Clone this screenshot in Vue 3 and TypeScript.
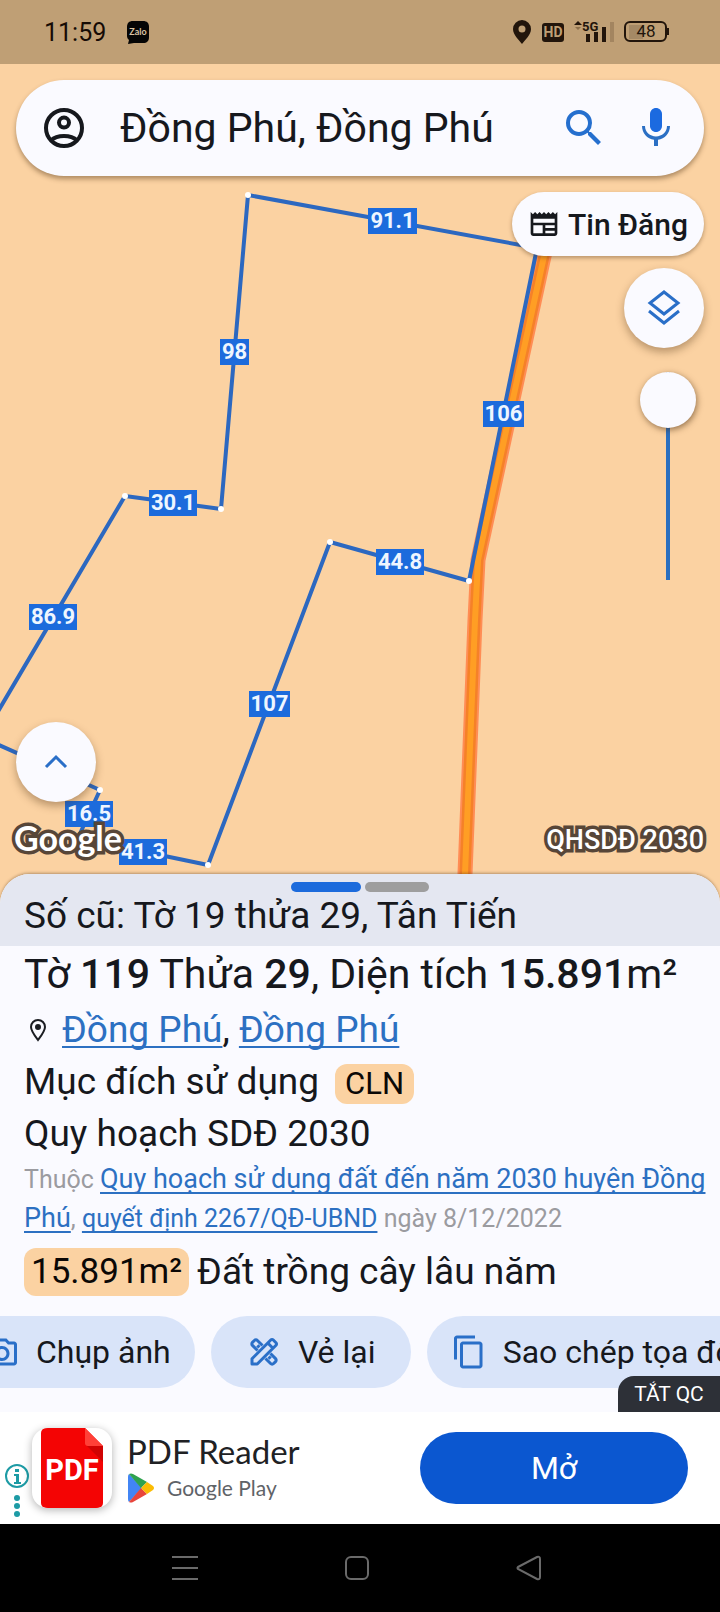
<script setup lang="ts">
import { onMounted, ref } from 'vue'

interface EdgeLabel {
  text: string
  x: number
  y: number
  w: number
}

const edgeLabels: EdgeLabel[] = [
  { text: '91.1', x: 368, y: 144, w: 49 },
  { text: '98', x: 220, y: 275, w: 29 },
  { text: '30.1', x: 149, y: 426, w: 48 },
  { text: '86.9', x: 29, y: 540, w: 48 },
  { text: '106', x: 483, y: 337, w: 41 },
  { text: '44.8', x: 376, y: 485, w: 48 },
  { text: '107', x: 249, y: 627, w: 41 },
  { text: '16.5', x: 65, y: 737, w: 48 },
  { text: '41.3', x: 119, y: 775, w: 48 },
]

const vertices: [number, number][] = [
  [248, 131], [221, 445], [125, 432], [330, 478], [469, 517], [208, 801], [100, 726],
]

const query = ref('Đồng Phú, Đồng Phú')
const opacity = ref(100)
const actions = ref<HTMLElement | null>(null)

onMounted(() => {
  if (actions.value) actions.value.scrollLeft = 64
})
</script>

<template>
  <div class="screen">
    <header class="status">
      <span class="time">11:59</span>
      <svg class="zalo" viewBox="0 0 24 24" aria-hidden="true">
        <path d="M7 1h10c4 0 6 2 6 6v10c0 4-2 6-6 6H8l-6 1 1-4c-1-1-2-2-2-4V7c0-4 2-6 6-6z" fill="#050505" />
        <text x="12" y="15" text-anchor="middle" class="zalo-text">Zalo</text>
      </svg>
      <div class="status-icons">
        <svg width="20" height="24" viewBox="0 0 20 24" aria-hidden="true">
          <path fill-rule="evenodd" d="M10 0a9 9 0 0 0-9 9c0 6 6 11 9 15 3-4 9-9 9-15a9 9 0 0 0-9-9zm0 5.500a3.500 3.500 0 1 1 0 7 3.500 3.500 0 0 1 0-7z" fill="#22150b" />
        </svg>
        <span class="hd">HD</span>
        <svg width="40" height="24" viewBox="0 0 40 24" aria-hidden="true">
          <path d="M0 5l4-4 4 4z" fill="#22150b" />
          <path d="M1 7h6l-3 3z" fill="#8c6f4b" />
          <text x="8" y="11" class="net">5G</text>
          <path d="M12 14h4v8h-4zM20 12h4v10h-4zM28 7h4v15h-4z" fill="#22150b" />
          <path d="M36 2h4v20h-4z" fill="#a38560" />
        </svg>
        <svg width="46" height="22" viewBox="0 0 46 22" aria-hidden="true">
          <path d="M5 4h14v14H5z" fill="#a58965" />
          <rect x="1" y="1" width="41" height="19" rx="5" fill="none" stroke="#22150b" stroke-width="2" />
          <path d="M43 7h2v7h-2z" fill="#22150b" />
          <text x="22" y="16" text-anchor="middle" class="batt">48</text>
        </svg>
      </div>
    </header>

    <main class="map">
      <svg class="parcels" viewBox="0 0 720 840" preserveAspectRatio="xMidYMin slice" role="img" aria-label="Bản đồ thửa đất">
        <g fill="none" stroke-linejoin="round">
          <path d="M546 183L478 496L475 556L465 810L464 850" stroke="#ff8d55" stroke-width="15" />
          <path d="M546 183L478 496L475 556L465 810L464 850" stroke="#f58128" stroke-width="11" />
          <path d="M546 183L478 496L475 556L465 810L464 850" stroke="#ff9e24" stroke-width="6" />
          <path d="M-10 661L125 432L221 445L248 131L537 184L469 517L330 478L208 801L78 774L100 726L-10 677" stroke="#2c68c0" stroke-width="4" />
        </g>
        <circle v-for="(p, i) in vertices" :key="i" :cx="p[0]" :cy="p[1]" r="3" fill="#fff" />
        <g v-for="l in edgeLabels" :key="l.text">
          <rect :x="l.x" :y="l.y" :width="l.w" height="26" fill="#1c6bdc" />
          <text :x="l.x + l.w / 2" :y="l.y + 20" text-anchor="middle" class="edge">{{ l.text }}</text>
        </g>
      </svg>

      <div class="overlay">
        <div class="top">
          <form class="search" role="search" @submit.prevent>
            <button type="button" class="icon-btn" aria-label="Tài khoản">
              <svg viewBox="0 0 24 24" fill="none" stroke="#16181d" stroke-width="2">
                <circle cx="12" cy="12" r="9" />
                <circle cx="12" cy="9.300" r="2.500" />
                <path d="M5.500 18.200c3-3 10-3 13 0" />
              </svg>
            </button>
            <input v-model="query" class="query" type="text" aria-label="Tìm kiếm" />
            <button type="submit" class="icon-btn" aria-label="Tìm">
              <svg viewBox="0 0 24 24" fill="#256fce">
                <path d="M15.500 14h-.79l-.28-.27A6.470 6.470 0 0 0 16 9.500 6.500 6.500 0 1 0 9.500 16c1.610 0 3.090-.59 4.230-1.570l.27.28v.79l5 4.990L20.490 19l-4.990-5zm-6 0C7.010 14 5 11.990 5 9.500S7.010 5 9.500 5 14 7.010 14 9.500 11.990 14 9.500 14z" />
              </svg>
            </button>
            <button type="button" class="icon-btn mic" aria-label="Tìm bằng giọng nói">
              <svg viewBox="0 0 24 24">
                <path fill="#1b6ae0" d="M12 14c1.660 0 3-1.340 3-3V5c0-1.660-1.340-3-3-3S9 3.340 9 5v6c0 1.660 1.340 3 3 3z" />
                <path fill="#2b6fc4" d="M17.500 11c0 3-2.500 5.200-5.500 5.200S6.500 14 6.500 11H5c0 3.530 2.610 6.430 6 6.920V21h2v-3.080c3.390-.49 6-3.390 6-6.920z" />
              </svg>
            </button>
          </form>
          <div class="tools">
            <button type="button" class="posts">
              <svg viewBox="0 0 24 24" fill="#16181d" aria-hidden="true">
                <path d="M22 3l-1.670 1.670L18.670 3 17 4.670 15.330 3l-1.660 1.670L12 3l-1.670 1.670L8.670 3 7 4.670 5.330 3 3.670 4.670 2 3v16c0 1.100.9 2 2 2h16c1.100 0 2-.9 2-2V3zM11 19H4v-6h7v6zm9 0h-7v-2h7v2zm0-4h-7v-2h7v2zm0-4H4V8h16v3z" />
              </svg>
              Tin Đăng
            </button>
            <button type="button" class="round" aria-label="Lớp bản đồ">
              <svg width="36" height="40" viewBox="0 0 36 40" fill="none" stroke="#2a6fc8" stroke-width="3">
                <path d="M18 4L32 15L18 26L4 15z" />
                <path d="M3 23L18 35L33 23" />
              </svg>
            </button>
            <input v-model.number="opacity" class="slider" type="range" min="0" max="100" aria-label="Độ trong suốt" />
          </div>
        </div>
        <div class="bottom">
          <button type="button" class="round" aria-label="Mở rộng">
            <svg width="24" height="16" viewBox="0 0 24 16" fill="none" stroke="#2a6fc8" stroke-width="3">
              <path d="M2 13L12 3L22 13" />
            </svg>
          </button>
          <div class="credits">
            <span class="google">Google</span>
            <span class="layer-name">QHSDĐ 2030</span>
          </div>
        </div>
      </div>
    </main>

    <section class="sheet">
      <div class="sheet-head">
        <div class="pager"><i class="on"></i><i></i></div>
        <p class="old">Số cũ: Tờ 19 thửa 29, Tân Tiến</p>
      </div>
      <div class="info">
        <h1>Tờ <b>119</b> Thửa <b>29</b>, Diện tích <b>15.891</b>m²</h1>
        <p class="row">
          <svg class="pin" viewBox="0 0 18 24" fill="none" stroke="#1b1d22" stroke-width="2" aria-hidden="true">
            <path d="M9 22C6 18 2 13 2 9a7 7 0 0 1 14 0c0 4-4 9-7 13z" />
            <circle cx="9" cy="9" r="2" fill="#1b1d22" />
          </svg>
          <span><a href="#">Đồng Phú</a>, <a href="#">Đồng Phú</a></span>
        </p>
        <p class="row purpose">Mục đích sử dụng <span class="tag">CLN</span></p>
        <p class="row">Quy hoạch SDĐ 2030</p>
        <p class="source">
          Thuộc <a href="#" class="plan">Quy hoạch sử dụng đất đến năm 2030 huyện Đồng Phú</a>,
          <a href="#">quyết định 2267/QĐ-UBND</a> ngày 8/12/2022
        </p>
        <p class="row land"><span class="tag big">15.891m²</span> Đất trồng cây lâu năm</p>
      </div>
      <div ref="actions" class="actions">
        <button type="button">
          <svg viewBox="0 0 24 24" aria-hidden="true"><path d="M14.120 5l1.830 2H20v12H4V7h4.050l1.830-2h4.240M15 3H9L7.170 5H4c-1.100 0-2 .9-2 2v12c0 1.100.9 2 2 2h16c1.100 0 2-.9 2-2V7c0-1.100-.9-2-2-2h-3.170L15 3zm-3 7c1.650 0 3 1.350 3 3s-1.350 3-3 3-3-1.350-3-3 1.350-3 3-3m0-2c-2.760 0-5 2.240-5 5s2.240 5 5 5 5-2.240 5-5-2.240-5-5-5z" /></svg>
          Chụp ảnh
        </button>
        <button type="button">
          <svg viewBox="0 0 24 24" fill="none" aria-hidden="true">
            <g class="tools-icon">
              <path d="M4.300 7.600a1.400 1.400 0 0 1 0-2l1.300-1.300a1.400 1.400 0 0 1 2 0L11 7.700M7.700 11L4.300 7.600M16.300 13l3.400 3.400a1.400 1.400 0 0 1 0 2l-1.300 1.300a1.400 1.400 0 0 1-2 0L13 16.300" />
              <path d="M4 20v-3.500L16.500 4a1.200 1.200 0 0 1 1.700 0L20 5.800a1.200 1.200 0 0 1 0 1.700L7.500 20zM14.500 6l3.500 3.500M7.500 9l1.500-1.500M15 16.500l1.500-1.500" />
            </g>
          </svg>
          Vẻ lại
        </button>
        <button type="button">
          <svg viewBox="0 0 24 24" aria-hidden="true"><path d="M16 1H4c-1.100 0-2 .9-2 2v14h2V3h12V1zm3 4H8c-1.100 0-2 .9-2 2v14c0 1.100.9 2 2 2h11c1.100 0 2-.9 2-2V7c0-1.100-.9-2-2-2zm0 16H8V7h11v14z" /></svg>
          Sao chép tọa độ
        </button>
      </div>
    </section>

    <aside class="ad">
      <button type="button" class="close-ad">TẮT QC</button>
      <div class="ad-side">
        <svg width="24" height="54" viewBox="0 0 24 54" fill="#1d9ba5" aria-hidden="true">
          <circle cx="12" cy="12" r="11" fill="none" stroke="#1d9ba5" stroke-width="2" />
          <path d="M10 5h4v3h-4zM9 10h5v8h2v2H9v-2h2v-6H9z" />
          <circle cx="12" cy="34" r="3" /><circle cx="12" cy="42" r="3" /><circle cx="12" cy="50" r="3" />
        </svg>
      </div>
      <svg class="pdf" viewBox="0 0 80 80" aria-hidden="true">
        <path d="M14 0H53L71 18V75a5 5 0 0 1-5 5H14a5 5 0 0 1-5-5V5a5 5 0 0 1 5-5z" fill="#f40404" />
        <path d="M55 18H71V34z" fill="#d00303" />
        <path d="M53 0L71 18H56a3 3 0 0 1-3-3z" fill="#ff4038" />
        <text x="40" y="52" text-anchor="middle" class="pdf-text">PDF</text>
      </svg>
      <div class="ad-text">
        <span class="ad-name">PDF Reader</span>
        <span class="store">
          <svg width="28" height="30" viewBox="0 0 28 30" aria-hidden="true">
            <path d="M2 1Q1 2 1 4V26Q1 28 2 29L15 15z" fill="#4285f4" />
            <path d="M2 1Q4 0 6 1L20 9L14 15z" fill="#2fa24f" />
            <path d="M2 29Q4 30 6 29L20 21L14 15z" fill="#e8453c" />
            <path d="M20 9L26 13Q28 15 26 17L20 21L14 15z" fill="#fbbc04" />
          </svg>
          Google Play
        </span>
      </div>
      <button type="button" class="open">Mở</button>
    </aside>

    <nav class="sysnav">
      <button type="button" aria-label="Đa nhiệm">
        <svg viewBox="0 0 28 28"><path d="M1 3H27M1 14H27M1 25H27" /></svg>
      </button>
      <button type="button" aria-label="Trang chủ">
        <svg viewBox="0 0 28 28"><rect x="3" y="3" width="22" height="22" rx="5" /></svg>
      </button>
      <button type="button" aria-label="Quay lại">
        <svg viewBox="0 0 28 28"><path d="M3 13L22 3Q25 2 25 5V23Q25 26 22 25L3 15Q2 14 3 13z" /></svg>
      </button>
    </nav>
  </div>
</template>

<style>
body {
  margin: 0;
}
</style>

<style scoped>
.screen {
  display: flex;
  flex-direction: column;
  min-height: 100vh;
  overflow: hidden;
  font-family: Roboto, "Noto Sans", sans-serif;
  color: #16181d;
  background: #fbd2a2;
}
* {
  box-sizing: border-box;
}
p,
h1 {
  margin: 0;
  font-weight: 400;
}
button {
  border: 0;
  padding: 0;
  font: inherit;
  color: inherit;
  background: none;
  display: flex;
  align-items: center;
  justify-content: center;
  flex: none;
}
svg {
  display: block;
  flex: none;
}
.status {
  display: flex;
  align-items: center;
  height: 64px;
  padding: 0 50px 0 44px;
  background: #bf9f75;
}
.time {
  font-size: 25px;
  color: #160b05;
}
.zalo {
  width: 24px;
  height: 24px;
  margin-left: 20px;
}
.zalo-text {
  font: 700 9px Lato, sans-serif;
  fill: #d9c3a3;
}
.status-icons {
  display: flex;
  align-items: center;
  gap: 10px;
  margin-left: auto;
}
.hd {
  width: 22px;
  border-radius: 3px;
  background: #22150b;
  color: #bf9f75;
  font-size: 14px;
  line-height: 19px;
  font-weight: 700;
  text-align: center;
}
.net {
  font-size: 13px;
  font-weight: 700;
  fill: #22150b;
}
.batt {
  font-size: 17px;
  fill: #22150b;
}
.map {
  position: relative;
  flex: 1;
  min-height: 840px;
  display: flex;
}
.parcels {
  position: absolute;
  inset: 0;
  width: 100%;
  height: 100%;
}
.edge {
  font-size: 22px;
  font-weight: 700;
  fill: #eef6ff;
}
.overlay {
  position: relative;
  flex: 1;
  min-width: 0;
  display: flex;
  flex-direction: column;
  justify-content: space-between;
  padding: 16px 16px 40px;
}
.search {
  display: flex;
  align-items: center;
  height: 96px;
  padding: 0 24px;
  border-radius: 48px;
  background: #fafaff;
  box-shadow: 0 3px 5px rgba(80, 50, 20, 0.45);
}
.icon-btn {
  width: 48px;
  height: 48px;
}
.icon-btn svg {
  width: 48px;
  height: 48px;
}
.mic {
  margin-left: 24px;
}
.query {
  flex: 1;
  min-width: 0;
  margin: 0 16px 0 32px;
  padding: 0;
  border: 0;
  outline: 0;
  background: none;
  font: inherit;
  font-size: 41px;
  line-height: 56px;
  color: #16181d;
}
.tools {
  display: flex;
  flex-direction: column;
  align-items: flex-end;
  padding-top: 16px;
}
.posts {
  height: 64px;
  gap: 8px;
  padding: 0 16px;
  border-radius: 32px;
  background: #fafaff;
  font-size: 30px;
  font-weight: 500;
  box-shadow: 0 2px 4px rgba(80, 50, 20, 0.4);
}
.posts svg {
  width: 32px;
  height: 32px;
}
.round {
  width: 80px;
  height: 80px;
  border-radius: 50%;
  background: #fafaff;
  box-shadow: 0 4px 8px rgba(80, 50, 20, 0.4);
}
.tools .round {
  margin: 12px 0 24px;
}
.slider {
  appearance: none;
  writing-mode: vertical-lr;
  direction: rtl;
  width: 56px;
  height: 208px;
  margin: 0 8px 0 0;
  background: linear-gradient(#2a6fc0, #2a6fc0) center / 4px 100% no-repeat;
}
.slider::-webkit-slider-thumb {
  appearance: none;
  width: 56px;
  height: 56px;
  border-radius: 50%;
  background: #fafaff;
  box-shadow: 1px 2px 6px rgba(80, 50, 20, 0.6);
}
.credits {
  display: flex;
  justify-content: space-between;
  align-items: center;
  height: 48px;
  margin-top: 14px;
  margin-left: -2px;
  color: #fff;
  line-height: 40px;
  paint-order: stroke;
  -webkit-text-stroke: 7px #574638;
}
.google {
  padding-bottom: 4px;
  font-family: Lato, sans-serif;
  font-size: 34px;
  font-weight: 700;
}
.layer-name {
  font-size: 27px;
  font-weight: 500;
}
.sheet {
  position: relative;
  margin-top: -30px;
  border-radius: 30px 30px 0 0;
  background: #fafaff;
  box-shadow: 0 -1px 3px rgba(80, 50, 20, 0.4);
}
.sheet-head {
  height: 72px;
  padding: 8px 24px 0;
  border-radius: 30px 30px 0 0;
  background: #e4e7f1;
}
.pager {
  display: flex;
  justify-content: center;
  gap: 4px;
}
.pager i {
  width: 64px;
  height: 10px;
  border-radius: 5px;
  background: #9e9e9e;
}
.pager .on {
  width: 70px;
  background: #1c6bdc;
}
.old {
  font-size: 37px;
  line-height: 48px;
}
.info {
  padding: 0 8px 0 24px;
}
h1 {
  padding-bottom: 2px;
  font-size: 41px;
  line-height: 56px;
}
h1 b {
  font-weight: 500;
}
.row {
  display: flex;
  align-items: center;
  font-size: 37px;
  line-height: 52px;
}
.pin {
  width: 18px;
  height: 24px;
  margin: 0 15px 0 5px;
}
a {
  color: #2c70c2;
  text-underline-offset: 4px;
  text-decoration-thickness: 2px;
  text-decoration-skip-ink: none;
}
.tag {
  padding: 0 10px;
  border-radius: 12px;
  background: #fbd2a2;
  color: #0b0806;
  font-size: 31px;
  line-height: 40px;
}
.purpose .tag {
  margin: 4px 0 0 16px;
}
.land .big {
  margin-right: 8px;
  padding: 0 7px;
  font-size: 35px;
  line-height: 48px;
}
.source {
  font-size: 25px;
  line-height: 39px;
  color: #9b9ba0;
}
.plan {
  font-size: 27px;
}
.land {
  padding-top: 8px;
}
.actions {
  display: flex;
  gap: 16px;
  padding: 18px 24px 24px;
  overflow-x: auto;
  scrollbar-width: none;
}
.actions button {
  height: 72px;
  min-width: 200px;
  gap: 16px;
  padding: 0 24px;
  border-radius: 36px;
  background: #d9e4f9;
  font-size: 32px;
  white-space: nowrap;
}
.actions svg {
  width: 36px;
  height: 36px;
  fill: #2a6fc8;
}
.tools-icon {
  fill: none;
  stroke: #2a6fc8;
  stroke-width: 2;
  stroke-linejoin: round;
}
.ad {
  position: relative;
  display: flex;
  align-items: center;
  height: 112px;
  padding: 0 32px 0 5px;
  background: #fff;
}
.close-ad {
  position: absolute;
  right: 0;
  bottom: 100%;
  width: 102px;
  height: 36px;
  border-radius: 16px 0 0 0;
  background: #2d3037;
  color: #fff;
  font-size: 21px;
}
.ad-side {
  width: 27px;
  padding-top: 46px;
}
.pdf {
  width: 80px;
  height: 80px;
  border-radius: 16px;
  background: #fff;
  box-shadow: 0 2px 8px rgba(0, 0, 0, 0.3);
}
.pdf-text {
  font-size: 29px;
  font-weight: 700;
  fill: #fff;
}
.ad-text {
  flex: 1;
  display: flex;
  flex-direction: column;
  padding-left: 15px;
  font-family: Lato, sans-serif;
}
.ad-name {
  font-size: 33px;
  line-height: 40px;
  color: #202124;
}
.store {
  display: flex;
  align-items: center;
  gap: 12px;
  font-size: 21px;
  line-height: 34px;
  color: #5f6368;
}
.open {
  width: 268px;
  height: 72px;
  border-radius: 36px;
  background: #0b57d0;
  color: #fff;
  font-size: 32px;
}
.sysnav {
  display: flex;
  justify-content: center;
  align-items: center;
  gap: 144px;
  height: 88px;
  padding-right: 6px;
  background: #000;
}
.sysnav svg {
  width: 28px;
  height: 28px;
  fill: none;
  stroke: #6a6a6a;
  stroke-width: 2;
}
</style>
